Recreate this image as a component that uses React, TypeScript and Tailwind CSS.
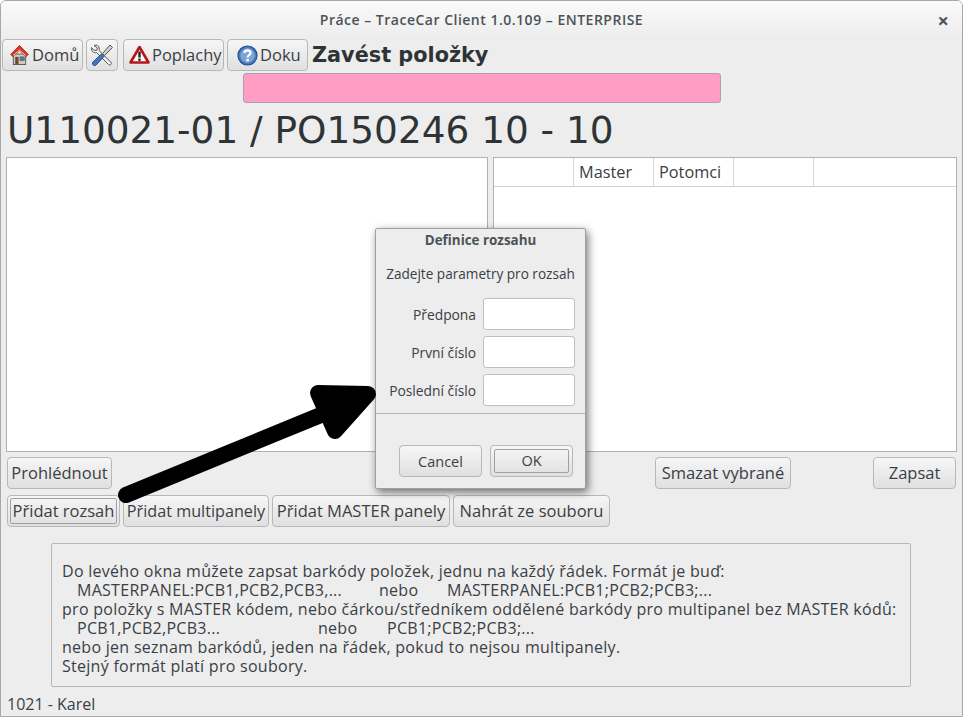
import React from 'react';

const btn = "h-[32px] rounded-[4px] border border-[#b8b8b8] bg-gradient-to-b from-[#f6f6f6] to-[#e0e0e0] text-[#3a4045] text-[16.5px] leading-none flex items-center justify-center shrink-0";

const HomeIcon = () => (
  <svg width="19" height="22" viewBox="0 0 20 22">
    <rect x="3.5" y="10" width="13" height="11" fill="#cfcabd" stroke="#5c5c50" />
    <rect x="5.5" y="13" width="3.5" height="8" fill="#6e4a30" />
    <rect x="10.5" y="13" width="4.5" height="4" fill="#5f7a99" stroke="#3f4f60" strokeWidth="0.5" />
    <path d="M0.8 10.5 L10 1 L19.2 10.5 L17 12.5 L10 6.5 L3 12.5 Z" fill="#e2342d" stroke="#9c1512" strokeWidth="0.9" strokeLinejoin="round" />
    <path d="M3.5 11.5 L10 6 L16.5 11.5" fill="none" stroke="#f7d9d0" strokeWidth="1" />
  </svg>
);

const ToolsIcon = () => (
  <svg width="24" height="25" viewBox="0 0 24 25">
    <path d="M4 2.5 L7.5 5 L6.5 7.5 L3.5 7 L1.5 4.5 C1 8 3.5 10.5 6.5 9.5 L18.5 21.5 C20 23 22.5 20.8 21 19.3 L9 7.5 C10 4 7.5 1 4 2.5 Z" fill="#f0f0ec" stroke="#55574f" strokeWidth="1" strokeLinejoin="round" />
    <path d="M20 2 L22.5 4.5 L14.5 12.5 L12.5 10.5 Z" fill="#cfd2ce" stroke="#55574f" strokeWidth="1" strokeLinejoin="round" />
    <path d="M11.5 11 L14 13.5 L6 22 C4.3 23.8 1.2 21 3 19 Z" fill="#3f78c0" stroke="#1f4a80" strokeWidth="1" strokeLinejoin="round" />
  </svg>
);

const WarnIcon = () => (
  <svg width="21" height="20" viewBox="0 0 21 20">
    <path d="M10.5 2 L19.5 17.5 L1.5 17.5 Z" fill="#fbfbf6" stroke="#b8141a" strokeWidth="2.6" strokeLinejoin="round" />
    <rect x="9.3" y="6.5" width="2.4" height="6" fill="#222" />
    <rect x="9.3" y="13.5" width="2.4" height="2.4" fill="#222" />
  </svg>
);

const HelpIcon = () => (
  <svg width="21" height="21" viewBox="0 0 21 21">
    <circle cx="10.5" cy="10.5" r="9.5" fill="#4a7cc0" stroke="#1f4f96" strokeWidth="1.2" />
    <circle cx="10.5" cy="10.5" r="7.2" fill="#7ea3d6" />
    <path d="M7.5 8 C7.5 4.5 13.5 4.5 13.5 8 C13.5 10.2 10.6 10 10.6 12.5" fill="none" stroke="#fff" strokeWidth="2.2" />
    <rect x="9.4" y="14" width="2.4" height="2.4" fill="#fff" />
  </svg>
);

const fieldClass = "w-[92px] h-[32px] rounded-[3px] border border-[#c0c0c0] bg-white shrink-0";

function Field({ label }: { label: string }) {
  return (
    <div className="flex items-center justify-end gap-[7px]">
      <span className="text-[13.8px] pt-[3px] text-[#3a4045]">{label}</span>
      <div className={fieldClass} />
    </div>
  );
}

export default function App() {
  return (
    <div className="relative w-[963px] h-[717px] overflow-hidden bg-[#ededed] border border-[#a8a8a8] rounded-t-[6px] flex flex-col font-['Open_Sans','Noto_Sans',sans-serif] text-[#3a4045]">
      {/* titulek okna */}
      <div className="h-[37px] shrink-0 flex items-center justify-center relative bg-gradient-to-b from-[#fafafa] to-[#ededed]">
        <span className="text-[14px] tracking-[0.5px] font-semibold text-[#4c5358]">Práce – TraceCar Client 1.0.109 – ENTERPRISE</span>
        <span className="absolute right-[13px] top-[5px] text-[20px] font-bold text-[#4c5358]">×</span>
      </div>

      {/* toolbar */}
      <div className="flex items-start pl-[1px] mt-[1px] h-[32px] shrink-0">
        <button className={`${btn} w-[81px] !justify-start pl-[7px] gap-[3px]`}><HomeIcon />Domů</button>
        <button className={`${btn} w-[32px] ml-[3px]`}><ToolsIcon /></button>
        <button className={`${btn} w-[101px] ml-[5px] !justify-start pl-[5px] gap-[2px]`}><WarnIcon />Poplachy</button>
        <button className={`${btn} w-[81px] ml-[3px] !justify-start pl-[9px] gap-[2px]`}><HelpIcon />Doku</button>
        <span className="ml-[4px] font-['DejaVu_Sans'] font-bold text-[20.8px] text-[#2e3436] mt-[1px]">Zavést položky</span>
      </div>

      <div className="h-[30px] shrink-0 mt-[2px] ml-[242px] w-[478px] rounded-[3px] border border-[#b0a0a8] bg-[#ff9dc4]" />

      <div className="h-[54px] shrink-0 flex items-center pl-[6px] font-['DejaVu_Sans'] text-[37.4px] text-[#2e3436]">
        U110021-01 / PO150246 10 - 10
      </div>

      {/* panely */}
      <div className="flex h-[295px] shrink-0 pl-[5px] gap-[5px]">
        <div className="w-[482px] border border-[#b0b0b0] bg-white" />
        <div className="w-[464px] border border-[#b0b0b0] bg-white">
          <div className="flex h-[29px] border-b border-[#d0d0d0] text-[16.3px]">
            <div className="w-[80px] border-r border-[#d8d8d8]" />
            <div className="w-[80px] border-r border-[#d8d8d8] pl-[5px] flex items-center">Master</div>
            <div className="w-[80px] border-r border-[#d8d8d8] pl-[5px] flex items-center">Potomci</div>
            <div className="w-[80px] border-r border-[#d8d8d8]" />
          </div>
        </div>
      </div>

      <div className="flex h-[32px] shrink-0 mt-[5px] pl-[6px]">
        <button className={`${btn} w-[105px]`}>Prohlédnout</button>
        <button className={`${btn} w-[136px] ml-[543px]`}>Smazat vybrané</button>
        <button className={`${btn} w-[83px] ml-[82px]`}>Zapsat</button>
      </div>

      <div className="flex h-[32px] shrink-0 mt-[6px] pl-[6px] gap-[3px]">
        <button className={`${btn} w-[113px] p-[2px]`}>
          <span className="w-full h-full border border-[#a0a0a0] rounded-[2px] flex items-center justify-center">Přidat rozsah</span>
        </button>
        <button className={`${btn} w-[146px] !text-[16.2px]`}>Přidat multipanely</button>
        <button className={`${btn} w-[178px]`}>Přidat MASTER panely</button>
        <button className={`${btn} w-[157px]`}>Nahrát ze souboru</button>
      </div>

      <div className="h-[144px] w-[860px] shrink-0 mt-[16px] ml-[50px] rounded-[2px] border border-[#b8b8b8] pl-[10px] pt-[18px] text-[16px] tracking-[0.28px] leading-[19.1px] whitespace-nowrap">
        <div>Do levého okna můžete zapsat barkódy položek, jednu na každý řádek. Formát je buď:</div>
        <div className="pl-[15px]">
          <span className="inline-block w-[302px]">MASTERPANEL:PCB1,PCB2,PCB3,...</span>
          <span className="inline-block w-[68px]">nebo</span>
          <span>MASTERPANEL:PCB1;PCB2;PCB3;...</span>
        </div>
        <div>pro položky s MASTER kódem, nebo čárkou/středníkem oddělené barkódy pro multipanel bez MASTER kódů:</div>
        <div className="pl-[15px]">
          <span className="inline-block w-[241px]">PCB1,PCB2,PCB3...</span>
          <span className="inline-block w-[69px]">nebo</span>
          <span>PCB1;PCB2;PCB3;...</span>
        </div>
        <div>nebo jen seznam barkódů, jeden na řádek, pokud to nejsou multipanely.</div>
        <div>Stejný formát platí pro soubory.</div>
      </div>

      <div className="pl-[6px] mt-[5px] text-[16px]">1021 - Karel</div>

      {/* dialog */}
      <div className="absolute left-[374px] top-[227px] w-[211px] h-[261px] rounded-[2px] border border-[#a0a0a0] bg-[#ededed] shadow-[2px_3px_9px_rgba(0,0,0,0.55)] flex flex-col">
        <div className="h-[23px] flex items-center justify-center text-[13.4px] font-bold text-[#4c5358]">Definice rozsahu</div>
        <div className="mt-[12px] text-center text-[13.6px] leading-[20px]">Zadejte parametry pro rozsah</div>
        <div className="mt-[14px] pr-[10px] flex flex-col gap-[6px]">
          <Field label="Předpona" />
          <Field label="První číslo" />
          <Field label="Poslední číslo" />
        </div>
        <div className="mt-[7px] border-t border-[#b8b8b8]" />
        <div className="mt-[31px] flex pl-[23px] gap-[8px]">
          <button className={`${btn} w-[83px] !text-[14.5px] pt-[2px]`}>Cancel</button>
          <button className={`${btn} w-[83px] p-[3px] !text-[14.5px]`}>
            <span className="w-full h-full border border-[#a0a0a0] rounded-[2px] flex items-center justify-center pt-[1px]">OK</span>
          </button>
        </div>
      </div>

      {/* sipka */}
      <svg className="absolute left-[99px] top-[369px]" width="290" height="140" viewBox="0 0 290 140">
        <line x1="26" y1="125" x2="233" y2="40" stroke="#000" strokeWidth="16" strokeLinecap="round" />
        <path d="M218 23 L268 24 L235 61 Z" fill="#000" stroke="#000" strokeWidth="16" strokeLinejoin="round" />
      </svg>
    </div>
  );
}
